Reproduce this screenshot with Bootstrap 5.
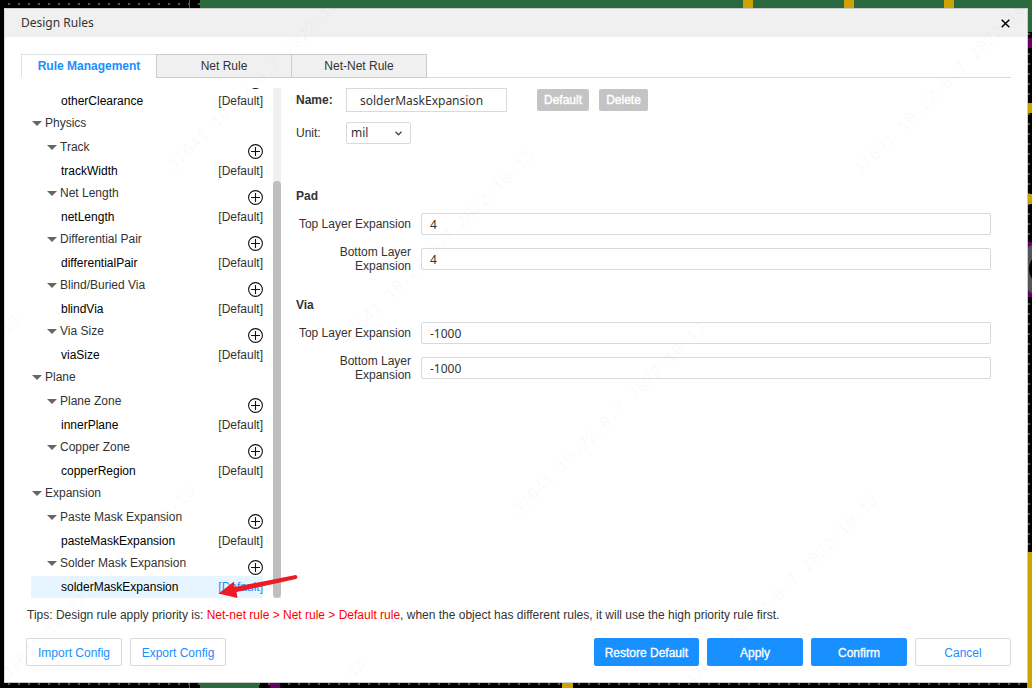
<!DOCTYPE html>
<html lang="en">
<head>
<meta charset="utf-8">
<meta name="viewport" content="width=device-width, initial-scale=1">
<title>Design Rules</title>
<link href="https://cdn.jsdelivr.net/npm/bootstrap@5.3.0/dist/css/bootstrap.min.css" rel="stylesheet">
<style>
:root{--edge:#d9d9d9;--blue:#1890ff}
body{font:12px/22px "Liberation Sans",Arial,sans-serif;color:#333;background:#000;padding:8px 4px 5px}
.board,.stamps{position:absolute;inset:0;pointer-events:none}
.board{z-index:0}
.stamps{z-index:5;fill:#888;fill-opacity:.06;font:17px "Liberation Mono",monospace}
.dialog{z-index:1;height:calc(100vh - 13px);border:1px solid #ccc;border-left-color:#ddd;background:#fff}
.titlebar{background:#f0f0f0;height:28px;padding:0 16px}
.titlebar h1,.field,.unit{font-family:"Noto Sans",sans-serif}
.titlebar h1{font-size:12px;line-height:30px}
.x-btn{width:11px;height:28px;line-height:0}
.rule-tabs{margin:17px 16px 10px;border-bottom:1px solid var(--edge);height:24px}
.rule-tabs .nav-link{width:136px;margin:0 -1px -1px 0;height:24px;padding:0;line-height:22px;color:#333;background:#f0f0f0;border:1px solid #ccc;border-radius:0}
.rule-tabs .nav-link.active{color:var(--blue);font-weight:700;background:#fff;border-bottom-color:#fff}
.work{min-height:0}
.tree-pane{width:250px;margin-left:26px}
.tree{width:232px;overflow-x:visible;overflow-y:clip}
.tree button{color:inherit}
.group-row{height:24px;flex:none}
.leaf-row{height:22px;flex:none;padding-left:30px;color:#000}
.leaf-row .tag{color:#333}
.twist{height:22px;padding-left:1px;gap:3px}
.lvl2 .twist{padding-left:16px}
.twist::before{content:"";border:5px solid transparent;border-top-color:#666;border-bottom:0}
.add-btn{width:15px;height:15px;margin-top:8px;line-height:0}
.picked{background:#e6f5ff}
.picked .tag{color:var(--blue)}
.arrow{position:absolute;left:185px;top:-2px;z-index:3}
.track{width:8px;background:#f0f0f0;padding-top:93px}
.thumb{background:#bfbfbf;border-radius:4px}
.form-pane{margin:0 36px 0 15px}
.cap{width:50px}
.field,.unit{height:22px;border:1px solid var(--edge);border-radius:2px;padding:0 8px;font-size:12px;line-height:20px;color:#333}
.name-field{width:161px;height:24px;padding:0 13px;border-radius:0}
.unit{width:65px;padding:0 4px;background:#fff url("data:image/svg+xml,%3Csvg xmlns='http://www.w3.org/2000/svg' width='7' height='5' viewBox='0 0 7 5'%3E%3Cpath d='M.5.8l3 3 3-3' fill='none' stroke='%23444' stroke-width='1.3'/%3E%3C/svg%3E") no-repeat right 8px center;appearance:none}
.mini{height:22px;min-width:49px;padding:0 7px;background:#c4c4c4;color:#fff;border-radius:2px;line-height:22px;-webkit-text-stroke:.4px #fff}
.mini-gap{margin:0 10px 0 30px}
.name-row{margin-bottom:10px}
.pair{height:22px;margin-bottom:13px;gap:10px}
.pair label{width:115px;line-height:14px;flex:none}
.sect{font-weight:700;font-size:12px;line-height:22px;margin:0 0 6px}
.sect-pad{margin-top:41px}
.sect-via{margin-top:24px}
.tips{margin:6px 22px 12px}
.top-rule{color:#f00}
.foot{padding:0 16px 16px 21px;gap:8px}
.act{min-width:96px;height:28px;border:1px solid var(--edge);border-radius:2px;background:#fff;color:var(--blue);padding:0 10px;line-height:28px}
.act-main{background:var(--blue);border-color:var(--blue);color:#fff;-webkit-text-stroke:.3px #fff}
</style>
</head>
<body class="position-relative overflow-hidden">
<svg class="board w-100 h-100" aria-hidden="true">
  <defs><pattern id="dots" width="10" height="10" patternUnits="userSpaceOnUse"><rect x="8" y="3" width="2" height="2" fill="#555"/></pattern></defs>
  <rect width="100%" height="100%" fill="#000"/>
  <rect width="100%" height="100%" fill="url(#dots)"/>
  <path d="M189.500 0V688" stroke="#555"/>
  <rect x="200" width="100%" height="32" fill="#2a683e"/>
  <g fill="#cca300"><rect x="743" width="10" height="30"/><rect x="844" width="10" height="30"/><rect x="944" width="10" height="30"/><rect x="1020" y="103" width="20" height="10"/><rect x="1020" y="194" width="20" height="10"/><rect x="1027" y="552" width="20" height="140"/><rect x="562" y="670" width="11" height="20"/></g>
  <rect x="1020" y="38" width="20" height="10" fill="#660066"/>
  <rect x="200" y="670" width="59" height="20" fill="#2a683e"/><rect x="270" y="670" width="10" height="20" fill="#660066"/>
  <rect x="1020" y="242" width="20" height="55" fill="#660066"/><circle cx="1046" cy="269" r="28" fill="#555"/><circle cx="1046" cy="269" r="17" fill="#000"/>
</svg>

<main class="dialog position-relative d-flex flex-column">
  <header class="titlebar d-flex justify-content-between align-items-center">
    <h1 class="m-0 fw-normal">Design Rules</h1>
    <button type="button" class="x-btn btn p-0 border-0" aria-label="Close"><svg width="9" height="9" viewBox="0 0 9 9"><path d="M.7.700l7.600 7.600M8.300.700L.7 8.300" stroke="#000" stroke-width="1.500"/></svg></button>
  </header>

  <nav class="rule-tabs nav nav-tabs flex-nowrap">
    <button type="button" class="nav-link active">Rule Management</button>
    <button type="button" class="nav-link">Net Rule</button>
    <button type="button" class="nav-link">Net-Net Rule</button>
  </nav>

  <div class="work d-flex flex-grow-1">
    <div class="tree-pane d-flex justify-content-between flex-shrink-0">
      <div class="tree d-flex flex-column justify-content-end" id="tree"></div>
      <div class="track d-flex"><div class="thumb w-100"></div></div>
    </div>

    <form class="form-pane flex-grow-1">
      <div class="name-row d-flex align-items-center">
        <label class="cap fw-bold" for="rname">Name:</label>
        <input class="field name-field" id="rname" value="solderMaskExpansion">
        <button type="button" class="mini mini-gap border-0">Default</button>
        <button type="button" class="mini border-0">Delete</button>
      </div>
      <div class="d-flex align-items-center">
        <label class="cap" for="runit">Unit:</label>
        <select class="unit" id="runit"><option>mil</option></select>
      </div>
      <h2 class="sect sect-pad">Pad</h2>
      <div class="pair d-flex align-items-center"><label class="text-end" for="p1">Top Layer Expansion</label><input class="field flex-grow-1" id="p1" value="4"></div>
      <div class="pair d-flex align-items-center"><label class="text-end" for="p2">Bottom Layer Expansion</label><input class="field flex-grow-1" id="p2" value="4"></div>
      <h2 class="sect sect-via">Via</h2>
      <div class="pair d-flex align-items-center"><label class="text-end" for="v1">Top Layer Expansion</label><input class="field flex-grow-1" id="v1" value="-1000"></div>
      <div class="pair d-flex align-items-center"><label class="text-end" for="v2">Bottom Layer Expansion</label><input class="field flex-grow-1" id="v2" value="-1000"></div>
    </form>
  </div>

  <p class="tips">Tips: Design rule apply priority is: <span class="top-rule">Net-net rule &gt; Net rule &gt; Default rule</span>, when the object has different rules, it will use the high priority rule first.</p>
  <footer class="foot d-flex">
    <button type="button" class="act">Import Config</button>
    <button type="button" class="act me-auto">Export Config</button>
    <button type="button" class="act act-main">Restore Default</button>
    <button type="button" class="act act-main">Apply</button>
    <button type="button" class="act act-main">Confirm</button>
    <button type="button" class="act">Cancel</button>
  </footer>
</main>

<svg class="stamps w-100 h-100" aria-hidden="true" id="stamps"></svg>

<script>
// Rule tree: [level, label]; level 3 entries are the rules themselves.
const rows=[[2,''],[3,'otherClearance'],[1,'Physics'],[2,'Track'],[3,'trackWidth'],[2,'Net Length'],[3,'netLength'],[2,'Differential Pair'],[3,'differentialPair'],[2,'Blind/Buried Via'],[3,'blindVia'],[2,'Via Size'],[3,'viaSize'],[1,'Plane'],[2,'Plane Zone'],[3,'innerPlane'],[2,'Copper Zone'],[3,'copperRegion'],[1,'Expansion'],[2,'Paste Mask Expansion'],[3,'pasteMaskExpansion'],[2,'Solder Mask Expansion'],[3,'solderMaskExpansion']];
const plus='<button type="button" class="add-btn p-0 border-0 bg-transparent" aria-label="Add rule"><svg width="15" height="15" viewBox="0 0 15 15" fill="none" stroke="#111" stroke-width="1.1"><circle cx="7.5" cy="7.5" r="6.9"/><path d="M7.5 3v9M3 7.5h9"/></svg></button>';
const arrow='<svg class="arrow" width="84" height="26" aria-hidden="true"><path d="M2.5 19.500L18 7.500l.5 5.500L78.500 1.200a2 2 0 0 1 1.500 3.800L20.500 18l1 6z" fill="#ed1c24"/></svg>';
document.getElementById('tree').innerHTML=rows.map(([l,t],i)=>{
  if(l===3){const on=i===rows.length-1;return `<div class="leaf-row d-flex justify-content-between position-relative${on?' picked':''}"><span>${t}</span><span class="tag">[Default]</span>${on?arrow:''}</div>`;}
  return `<div class="group-row lvl${l} d-flex justify-content-between align-items-start">${t?`<button type="button" class="twist d-flex align-items-center border-0 bg-transparent pe-0 py-0">${t}</button>`:'<span></span>'}${l===2?plus:''}</div>`;
}).join('');
document.getElementById('stamps').innerHTML=[[174,172],[347,344],[519,516],[692,688],[860,176],[1034,348],[8,680],[-166,508],[179,852],[864,860],[688,4]].map(([x,y])=>`<text transform="translate(${x} ${y}) rotate(-45)">J7641 10.22.0.7 2022-10-13</text>`).join('');
</script>
<script src="https://cdn.jsdelivr.net/npm/bootstrap@5.3.0/dist/js/bootstrap.bundle.min.js"></script>
</body>
</html>
